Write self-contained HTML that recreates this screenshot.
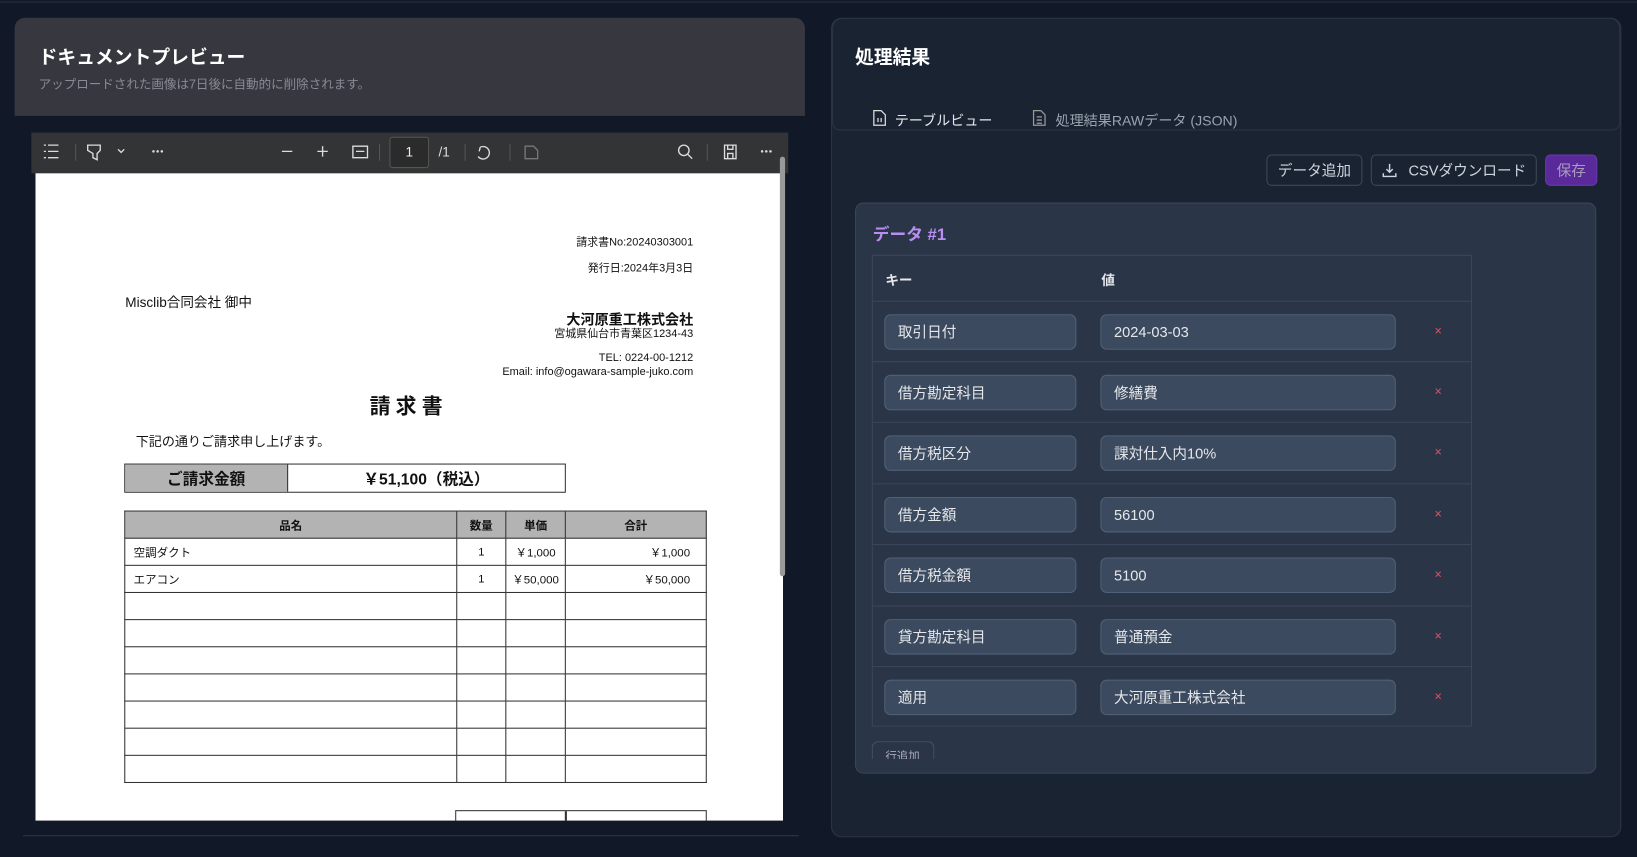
<!DOCTYPE html>
<html><head><meta charset="utf-8"><style>
*{box-sizing:border-box;margin:0;padding:0}
html,body{width:1637px;height:857px;overflow:hidden;background:#111827}
body{font-family:"Liberation Sans","Noto Sans CJK JP",sans-serif}
#w{position:absolute;left:0;top:0;width:1568px;height:821px;transform:scale(1.04401);transform-origin:0 0}
.a{position:absolute}
.lp{left:14px;top:17px;width:757px;height:94px;background:#37373f;border-radius:10px 10px 0 0}
.tb{left:30px;top:127px;width:725px;height:39px;background:#333435}
.pg{left:34px;top:166px;width:716px;height:620px;background:#fff;overflow:hidden;color:#111}
.ic{stroke:#ddd;fill:none;stroke-width:1.3}
.sep{width:1px;height:16px;background:#555;top:138px}
.rp{left:796px;top:17px;width:757px;height:785px;background:#1a2332;border:1px solid #2b3545;border-radius:10px}
.btn{border:1px solid #3d4859;border-radius:5px;color:#cfd5de;font-size:14px;display:flex;align-items:center;justify-content:center;background:#1a2332}
.card{left:819px;top:194px;width:710px;height:547px;background:#2a3547;border:1px solid #3a4658;border-radius:8px}
.tbl{left:835px;top:244px;width:575px;height:452px;border:1px solid #3b475a}
.row{position:absolute;left:835px;width:575px;border-top:1px solid #3b475a;height:58px}
.in{position:absolute;height:34px;background:#3b4a5e;border:1px solid #506078;border-radius:6px;color:#e5e7eb;font-size:14px;padding-left:12px;line-height:32px}
.x{position:absolute;color:#e05260;font-size:12px}
table{border-collapse:collapse;position:absolute}
td{border:1.5px solid #333;font-size:11px;height:26px;padding:0}
</style></head><body><div id="w">
<div class="a" style="left:0;top:1px;width:1568px;height:2px;background:#1e2633"></div>
<div class="a lp"></div>
<div class="a" style="left:37px;top:41px;color:#fff;font-size:18px;font-weight:bold">ドキュメントプレビュー</div>
<div class="a" style="left:37px;top:72px;color:#8a8a94;font-size:12px">アップロードされた画像は7日後に自動的に削除されます。</div>
<div class="a tb"></div>
<svg class="a" style="left:40px;top:136px" width="730" height="20">
<g class="ic"><path d="M2 3h2M6 3h10M2 9h2M6 9h10M2 15h2M6 15h10"/><path d="M44 3h12v5l-3 3v6l-4-2v-4l-5-3z"/><path d="M73 7l3 3 3-3"/>
<path d="M230 9h10M264 9h10M269 4v10M298 4h14v11h-14zM301 9h8"/>
<path d="M420 5a6 6 0 1 1-2 9M420 5l-1 4"/><path d="M463 4h8l4 4v8h-12z" stroke="#777"/>
<circle cx="615" cy="8" r="5"/><path d="M619 12l4 4"/><path d="M654 3h11v13h-11zM657 3v4h5v-4M657 16v-5h5v5"/></g>
<g fill="#ddd"><circle cx="107" cy="9" r="1.2"/><circle cx="111" cy="9" r="1.2"/><circle cx="115" cy="9" r="1.2"/><circle cx="690" cy="9" r="1.2"/><circle cx="694" cy="9" r="1.2"/><circle cx="698" cy="9" r="1.2"/></g>
</svg>
<div class="a sep" style="left:72px"></div><div class="a sep" style="left:363px"></div><div class="a sep" style="left:445px"></div><div class="a sep" style="left:488px"></div><div class="a sep" style="left:677px"></div>
<div class="a" style="left:373px;top:131px;width:38px;height:30px;border:1px solid #555;background:#2b2b2c;color:#eee;font-size:13px;text-align:center;line-height:28px;border-radius:3px">1</div>
<div class="a" style="left:420px;top:138px;color:#ddd;font-size:13px">/1</div>
<div class="a pg">
<div class="a" style="right:86px;top:58px;font-size:10.5px">請求書No:20240303001</div>
<div class="a" style="right:86px;top:83px;font-size:10.5px">発行日:2024年3月3日</div>
<div class="a" style="left:86px;top:113px;font-size:13px">Misclib合同会社 御中</div>
<div class="a" style="right:86px;top:129px;font-size:13.5px;font-weight:bold">大河原重工株式会社</div>
<div class="a" style="right:86px;top:146px;font-size:10.5px">宮城県仙台市青葉区1234-43</div>
<div class="a" style="right:86px;top:171px;font-size:10.5px">TEL: 0224-00-1212</div>
<div class="a" style="right:86px;top:184px;font-size:10.5px">Email: info@ogawara-sample-juko.com</div>
<div class="a" style="left:320px;top:207px;font-size:20px;font-weight:bold;letter-spacing:5px">請求書</div>
<div class="a" style="left:96px;top:246px;font-size:12.5px">下記の通りご請求申し上げます。</div>
<div class="a" style="left:85px;top:278px;width:423px;height:28px;border:1.5px solid #333;display:flex">
<div style="width:156px;background:#b3b3b3;border-right:1.5px solid #333;font-size:15px;font-weight:bold;text-align:center;line-height:29px">ご請求金額</div>
<div style="flex:1;text-align:center;font-size:15px;font-weight:bold;line-height:29px">￥51,100（税込）</div></div>
<table style="left:85px;top:323px;width:558px">
<tr style="background:#b3b3b3;font-weight:bold;text-align:center"><td style="width:318px">品名</td><td style="width:47px">数量</td><td style="width:57px">単価</td><td>合計</td></tr>
<tr><td style="padding-left:8px">空調ダクト</td><td style="text-align:center">1</td><td style="text-align:center">￥1,000</td><td style="text-align:right;padding-right:15px">￥1,000</td></tr>
<tr><td style="padding-left:8px">エアコン</td><td style="text-align:center">1</td><td style="text-align:center">￥50,000</td><td style="text-align:right;padding-right:15px">￥50,000</td></tr>
<tr><td></td><td></td><td></td><td></td></tr><tr><td></td><td></td><td></td><td></td></tr><tr><td></td><td></td><td></td><td></td></tr><tr><td></td><td></td><td></td><td></td></tr><tr><td></td><td></td><td></td><td></td></tr><tr><td></td><td></td><td></td><td></td></tr><tr><td></td><td></td><td></td><td></td></tr>
</table>
<div class="a" style="left:402px;top:610px;width:241px;height:20px;border:1.5px solid #333"><div style="position:absolute;left:104px;top:0;width:1.5px;height:20px;background:#333"></div></div>
</div>
<div class="a" style="left:747px;top:150px;width:5px;height:402px;background:#999;border-radius:3px"></div>
<div class="a" style="left:22px;top:800px;width:743px;height:1px;background:#2e3848"></div>

<div class="a rp"></div>
<div class="a" style="left:797px;top:17px;width:755px;height:108px;border:1px solid #2b3545;border-radius:10px 10px 8px 8px"></div>
<div class="a" style="left:819px;top:41px;color:#fff;font-size:18px;font-weight:bold">処理結果</div>
<svg class="a" style="left:835px;top:104px" width="360" height="18"><g fill="none" stroke="#ddd" stroke-width="1.2"><path d="M2 2h7l4 4v10H2z"/><path d="M6 9v4M9 9v4" /></g><g fill="none" stroke="#999" stroke-width="1.2"><path d="M155 2h7l4 4v10h-11zM158 8h5M158 11h5M158 14h5"/></g></svg>
<div class="a" style="left:857px;top:104px;color:#e5e7eb;font-size:13.5px">テーブルビュー</div>
<div class="a" style="left:1011px;top:104px;color:#9aa3af;font-size:13.5px">処理結果RAWデータ (JSON)</div>
<div class="a btn" style="left:1213px;top:148px;width:92px;height:30px">データ追加</div>
<div class="a btn" style="left:1313px;top:148px;width:159px;height:30px"><svg width="16" height="16" style="margin-right:10px"><path d="M8 2v8M5 7l3 3 3-3M2 11v3h12v-3" fill="none" stroke="#cfd5de" stroke-width="1.4"/></svg>CSVダウンロード</div>
<div class="a btn" style="left:1480px;top:148px;width:50px;height:30px;background:#5b2a9a;border-color:#6b36b0;color:#a99cc0">保存</div>
<div class="a card"></div>
<div class="a" style="left:836px;top:211px;color:#b98ef0;font-size:16px;font-weight:bold">データ #1</div>
<div class="a tbl"></div>
<div class="a" style="left:848px;top:258px;color:#e5e7eb;font-size:13px;font-weight:bold">キー</div>
<div class="a" style="left:1055px;top:258px;color:#e5e7eb;font-size:13px;font-weight:bold">値</div>
<div class="row" style="top:288px"><div class="in" style="left:12px;top:12px;width:184px">取引日付</div><div class="in" style="left:219px;top:12px;width:283px">2024-03-03</div><div class="x" style="left:539px;top:21px">×</div></div>
<div class="row" style="top:346px"><div class="in" style="left:12px;top:12px;width:184px">借方勘定科目</div><div class="in" style="left:219px;top:12px;width:283px">修繕費</div><div class="x" style="left:539px;top:21px">×</div></div>
<div class="row" style="top:404px"><div class="in" style="left:12px;top:12px;width:184px">借方税区分</div><div class="in" style="left:219px;top:12px;width:283px">課対仕入内10%</div><div class="x" style="left:539px;top:21px">×</div></div>
<div class="row" style="top:463px"><div class="in" style="left:12px;top:12px;width:184px">借方金額</div><div class="in" style="left:219px;top:12px;width:283px">56100</div><div class="x" style="left:539px;top:21px">×</div></div>
<div class="row" style="top:521px"><div class="in" style="left:12px;top:12px;width:184px">借方税金額</div><div class="in" style="left:219px;top:12px;width:283px">5100</div><div class="x" style="left:539px;top:21px">×</div></div>
<div class="row" style="top:580px"><div class="in" style="left:12px;top:12px;width:184px">貸方勘定科目</div><div class="in" style="left:219px;top:12px;width:283px">普通預金</div><div class="x" style="left:539px;top:21px">×</div></div>
<div class="row" style="top:638px"><div class="in" style="left:12px;top:12px;width:184px">適用</div><div class="in" style="left:219px;top:12px;width:283px">大河原重工株式会社</div><div class="x" style="left:539px;top:21px">×</div></div>
<div class="a" style="left:835px;top:710px;width:60px;height:17px;overflow:hidden"><div style="border:1px solid #445064;border-radius:6px;height:28px;color:#aab;font-size:11px;padding:5px 0 0 12px">行追加</div></div>
</div></body></html>
